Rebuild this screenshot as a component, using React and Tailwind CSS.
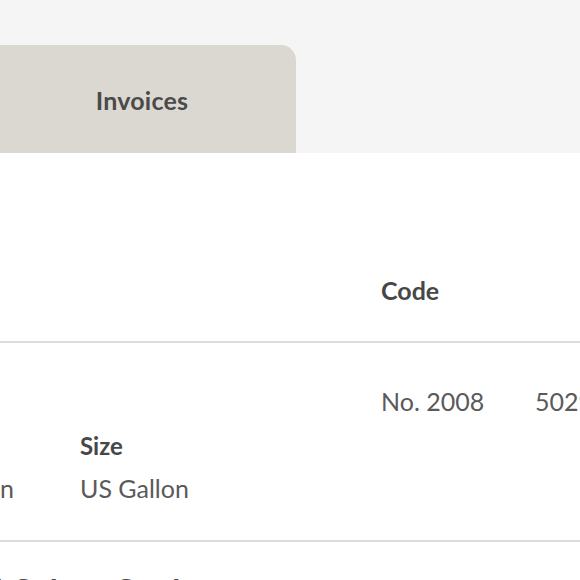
export default function App() {
  const font = { fontFamily: "Lato, 'Open Sans', sans-serif" };

  return (
    <div
      className="w-[580px] h-[580px] overflow-hidden bg-white text-[#4a4a4a]"
      style={font}
    >
      {/* tab bar */}
      <div className="h-[153px] bg-[#f5f5f5] flex items-end overflow-hidden">
        <div className="-ml-[12px] w-[308px] h-[108px] bg-[#dbd8d2] rounded-tr-[15px] flex items-center justify-center pt-[4px]">
          <span className="text-[25px] font-bold text-[#4a4a4a] tracking-[0.2px]">
            Invoices
          </span>
        </div>
      </div>

      {/* table header */}
      <div className="h-[190px] flex items-end pb-[35px] border-b-2 border-[#dcdcdc]">
        <div className="w-[381px] shrink-0" />
        <div className="text-[25px] font-bold text-[#474747] leading-[32px]">
          Code
        </div>
      </div>

      {/* row */}
      <div className="h-[199px] flex border-b-2 border-[#dcdcdc] overflow-hidden">
        <div className="w-[381px] shrink-0 flex items-end pb-[36px]">
          <div className="-ml-[90px] w-[170px] shrink-0 flex flex-col">
            <span className="text-[25px] leading-[32px] invisible">Unit</span>
            <span className="text-[25px] leading-[32px] text-[#5a5a5a] text-right pr-[66px]">
              Gallon
            </span>
          </div>
          <div className="flex flex-col gap-[10px]">
            <span className="text-[24px] font-bold leading-[32px] text-[#474747]">
              Size
            </span>
            <span className="text-[25px] leading-[32px] text-[#5a5a5a]">
              US Gallon
            </span>
          </div>
        </div>
        <div className="pt-[42px] flex whitespace-nowrap">
          <span className="w-[154px] shrink-0 text-[25px] leading-[32px] text-[#5a5a5a]">
            No. 2008
          </span>
          <span className="text-[25px] leading-[32px] text-[#5a5a5a]">
            5029 4410
          </span>
        </div>
      </div>

      {/* next section title, cut off */}
      <div className="pt-[29px] -ml-[58px] whitespace-nowrap text-[32px] font-bold text-[#474747] leading-[40px]">
        Real Colour Card
      </div>
    </div>
  );
}
